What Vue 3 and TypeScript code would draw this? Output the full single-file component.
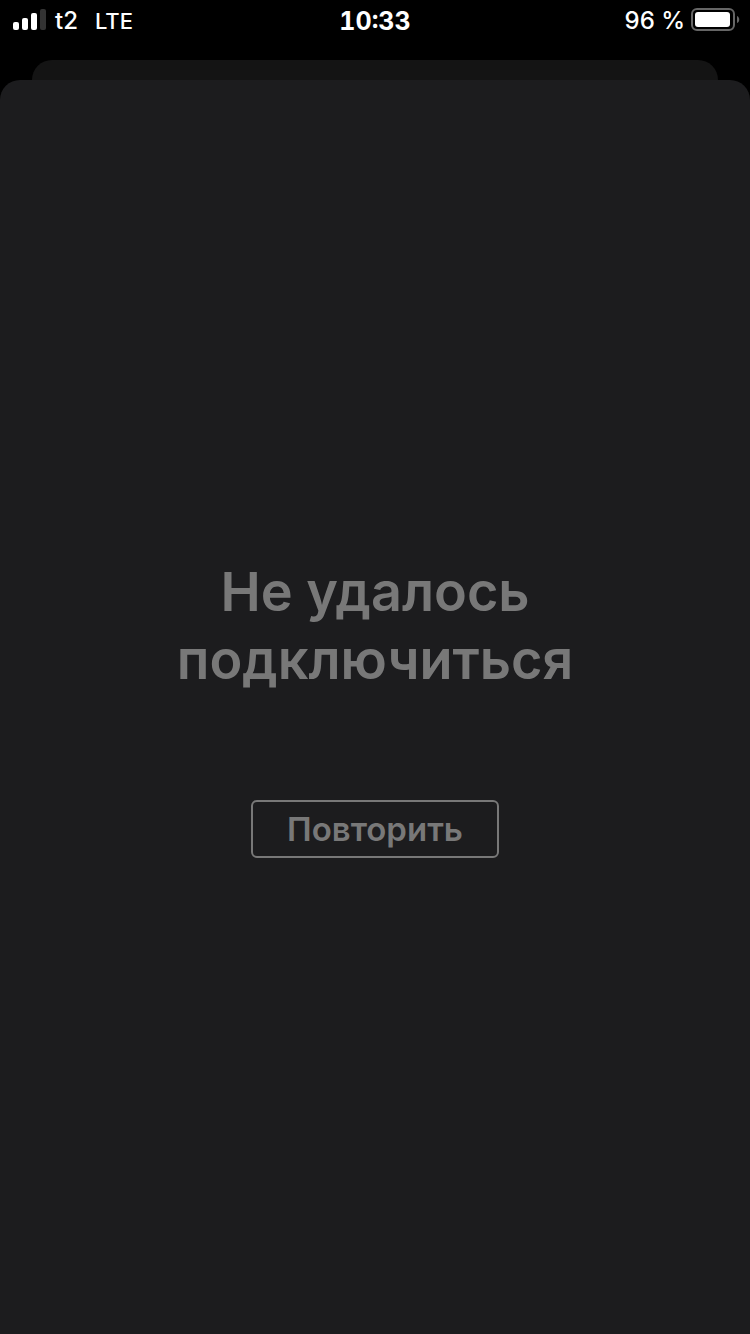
<script setup lang="ts">
import { ref } from 'vue'

const time = ref('10:33')
const carrier = ref('t2')
const network = ref('LTE')
const battery = ref('96 %')
const attempts = ref(0)

function retry(): void {
  attempts.value += 1
}
</script>

<template>
  <div class="screen">
    <header class="status">
      <div class="side start">
        <svg class="signal" width="34" height="24" viewBox="0 0 34 24" aria-hidden="true">
          <rect x="0" y="13" width="6" height="8" rx="2" fill="#fff" />
          <rect x="9" y="9" width="6" height="12" rx="2" fill="#fff" />
          <rect x="18" y="4" width="6" height="17" rx="2" fill="#fff" />
          <rect x="27" y="0" width="6" height="21" rx="2" fill="#333" />
        </svg>
        <span class="carrier">{{ carrier }}</span>
        <span class="network">{{ network }}</span>
      </div>
      <time class="time">{{ time }}</time>
      <div class="side end">
        <span>{{ battery }}</span>
        <svg class="battery" width="49" height="26" viewBox="0 0 49 26" aria-hidden="true">
          <rect x="1" y="1" width="42" height="21" rx="5" fill="none" stroke="#666" stroke-width="2" />
          <rect x="4" y="4" width="35" height="15" rx="3" fill="#fff" />
          <path d="M46 8c3 1 3 6 0 7z" fill="#666" />
        </svg>
      </div>
    </header>
    <div class="back-sheet"></div>
    <main class="sheet">
      <h1>Не удалось подключиться</h1>
      <button type="button" @click="retry">Повторить</button>
    </main>
  </div>
</template>

<style>
body {
  margin: 0;
  background: #000;
}
</style>

<style scoped>
.screen {
  display: flex;
  flex-direction: column;
  min-height: 100vh;
  background: #000;
  font-family: Inter, "Liberation Sans", sans-serif;
}
.status {
  display: grid;
  grid-template-columns: 1fr auto 1fr;
  align-items: center;
  height: 42px;
  margin-bottom: 18px;
  color: #fff;
  font-size: 24px;
  font-weight: 500;
  line-height: 42px;
}
.side {
  display: flex;
  align-items: center;
}
.start {
  padding-left: 13px;
}
.end {
  justify-content: flex-end;
  gap: 6px;
  padding-right: 10px;
}
.signal,
.battery {
  flex: none;
}
.carrier {
  margin-left: 8px;
}
.network {
  margin-left: 17px;
  font-size: 22px;
}
.time {
  font-size: 25px;
  font-weight: 700;
  font-variant-numeric: tabular-nums;
}
.back-sheet {
  height: 20px;
  margin: 0 32px;
  border-radius: 20px 20px 0 0;
  background: #141414;
}
.sheet {
  display: flex;
  flex: 1;
  flex-direction: column;
  align-items: center;
  justify-content: center;
  border-radius: 20px 20px 0 0;
  background: #1c1c1e;
  color: #787878;
}
h1 {
  max-width: 480px;
  margin: 0 0 106px;
  padding-top: 2px;
  font-size: 54px;
  font-weight: 600;
  line-height: 68px;
  text-align: center;
}
button {
  box-sizing: border-box;
  height: 58px;
  padding: 0 34px;
  border: 2px solid #787878;
  border-radius: 6px;
  background: transparent;
  color: inherit;
  font: inherit;
  font-size: 33px;
  font-weight: 600;
}
</style>
